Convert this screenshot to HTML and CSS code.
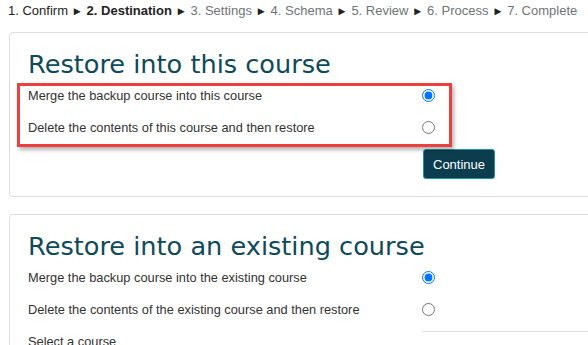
FILE: index.html
```html
<!DOCTYPE html>
<html lang="en">
<head>
  <meta charset="UTF-8">
  <meta name="viewport" content="width=device-width, initial-scale=1.0">
  <title>Restore course</title>
  <link rel="stylesheet" href="styles.css">
</head>
<body>
  <!-- Restore progress -->
  <div class="steps">
    <span class="done">1. Confirm</span> <span class="arrow">&#9658;</span>
    <span class="current">2. Destination</span> <span class="arrow">&#9658;</span>
    <span>3. Settings</span> <span class="arrow">&#9658;</span>
    <span>4. Schema</span> <span class="arrow">&#9658;</span>
    <span>5. Review</span> <span class="arrow">&#9658;</span>
    <span>6. Process</span> <span class="arrow">&#9658;</span>
    <span>7. Complete</span>
  </div>

  <!-- Restore into this course -->
  <div class="card">
    <h2>Restore into this course</h2>
    <div class="highlight">
      <div class="option">
        <label for="this-merge">Merge the backup course into this course</label>
        <input type="radio" name="target-this" id="this-merge" checked>
      </div>
      <div class="option">
        <label for="this-delete">Delete the contents of this course and then restore</label>
        <input type="radio" name="target-this" id="this-delete">
      </div>
    </div>
    <div class="actions">
      <button class="btn">Continue</button>
    </div>
  </div>

  <!-- Restore into an existing course -->
  <div class="card">
    <h2>Restore into an existing course</h2>
    <div class="option">
      <label for="existing-merge">Merge the backup course into the existing course</label>
      <input type="radio" name="target-existing" id="existing-merge" checked>
    </div>
    <div class="option">
      <label for="existing-delete">Delete the contents of the existing course and then restore</label>
      <input type="radio" name="target-existing" id="existing-delete">
    </div>
    <div class="option">
      <label>Select a course</label>
      <div class="course-search"></div>
    </div>
  </div>
</body>
</html>
```

FILE: styles.css
```css
/* Global Styles */
body {
  font-family: 'Liberation Sans', Arial, sans-serif;
  font-size: 12.8px;
  color: #333;
  background-color: #fff;
  margin: 0;
  padding: 0 0 0 9px;
  overflow: hidden;
}

/* Step bar */
.steps {
  padding-top: 3px;
  margin-left: -1px;
  font-size: 13px;
  line-height: 15px;
  color: #6f7478;
  white-space: nowrap;
}

.steps .done {
  color: #222;
}

.steps .current {
  color: #222;
  font-weight: bold;
}

.steps .arrow {
  color: #222;
  font-size: 11.5px;
}

/* Cards */
.card {
  width: 640px;
  border: 1px solid #dcdcdc;
  border-radius: 4px;
  padding: 15px 18px 17px;
  margin-top: 13px;
}

.card + .card {
  margin-top: 17px;
}

.card h2 {
  font-family: 'DejaVu Sans', Verdana, sans-serif;
  font-weight: normal;
  font-size: 25.6px;
  line-height: 32px;
  color: #0e4a5a;
  margin: 0 0 5px;
}

/* Form rows */
.option {
  display: grid;
  grid-template-columns: 394px 1fr;
  align-items: center;
  height: 20px;
  margin-bottom: 12px;
}

.option input {
  margin: 0;
  width: 13px;
  height: 13px;
}

/* Annotation box round the first pair of options */
.highlight {
  position: relative;
  width: 407px;
}

.highlight::before {
  content: "";
  position: absolute;
  top: -2px;
  left: -11px;
  right: -17px;
  bottom: -10px;
  border: 3px solid #ee3f3f;
  box-shadow: 2px 3px 4px rgba(0, 0, 0, 0.3);
  pointer-events: none;
}

.actions {
  padding-left: 395px;
  margin-top: 2px;
}

.btn {
  font-family: 'Liberation Sans', Arial, sans-serif;
  font-size: 13px;
  height: 30px;
  padding: 0 9px;
  color: #fff;
  background-color: #0b3d4f;
  border: 1px solid #1a94a4;
  border-radius: 3px;
}

.course-search {
  align-self: start;
  height: 20px;
  border-top: 1px solid #e2e2e2;
}
```
